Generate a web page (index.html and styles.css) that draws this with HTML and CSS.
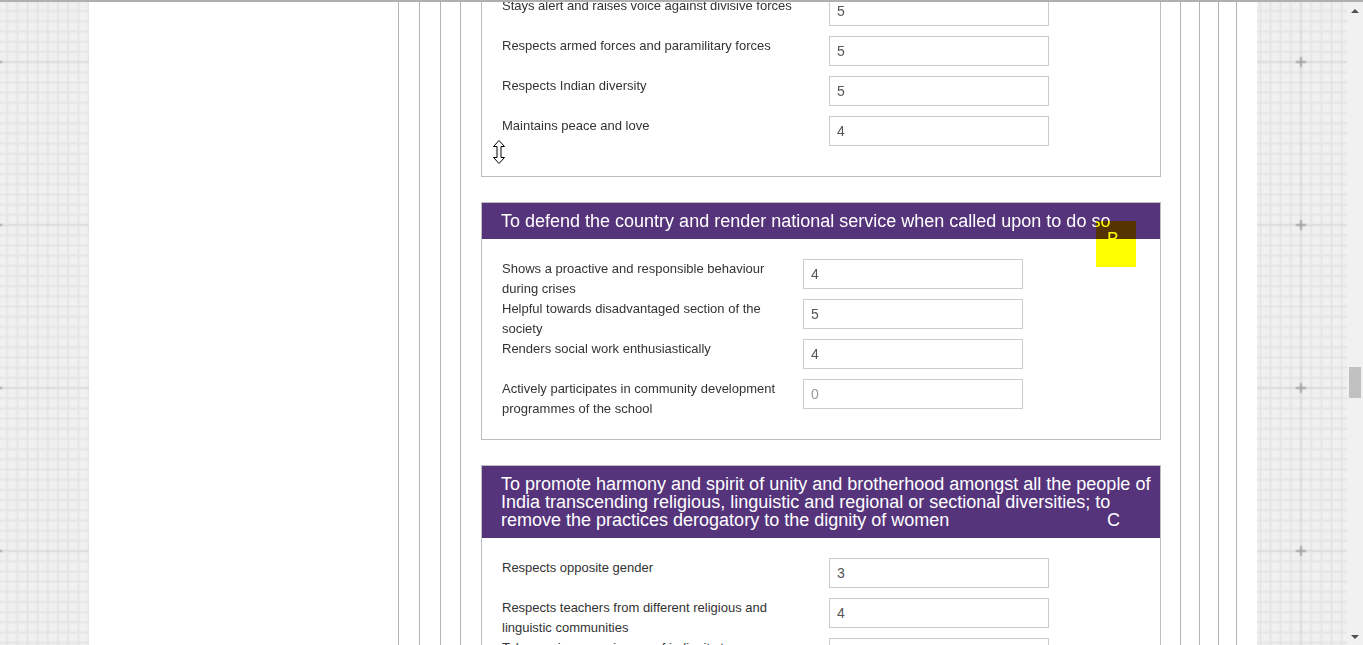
FILE: index.html
```html
<!DOCTYPE html>
<html lang="en">
<head>
<meta charset="utf-8">
<title>Fundamental duties assessment</title>
<link rel="stylesheet" href="styles.css">
</head>
<body>
<div class="topline"></div>
<div class="window">
  <aside class="grid-panel left">
    <svg class="grid" xmlns="http://www.w3.org/2000/svg">
      <defs>
        <pattern id="gridL" width="163" height="163" patternUnits="userSpaceOnUse" x="-84.5" y="-21.5">
          <rect width="163" height="163" fill="#f0f0f0"/>
          <path d="M0 0V163M10.19 0V163M20.38 0V163M30.56 0V163M40.75 0V163M50.94 0V163M61.13 0V163M71.31 0V163M91.69 0V163M101.88 0V163M112.06 0V163M122.25 0V163M132.44 0V163M142.63 0V163M152.81 0V163M163 0V163" stroke="#e5e5e5" stroke-width="2"/>
          <path d="M0 0H163M0 10.19H163M0 20.38H163M0 30.56H163M0 40.75H163M0 50.94H163M0 61.13H163M0 71.31H163M0 91.69H163M0 101.88H163M0 112.06H163M0 122.25H163M0 132.44H163M0 142.63H163M0 152.81H163M0 163H163" stroke="#e5e5e5" stroke-width="2"/>
          <path d="M81.5 0V163M0 81.5H163" stroke="#dadada" stroke-width="2"/>
          <path d="M76.5 81.5H86.5M81.5 76.5V86.5" stroke="#a3a3a3" stroke-width="2"/>
        </pattern>
      </defs>
      <rect width="100%" height="100%" fill="url(#gridL)"/>
    </svg>
  </aside>

  <main class="page">
    <div class="frame f1"><div class="frame f2"><div class="frame f3"><div class="frame f4">

      <section class="duty first">
        <h3 class="duty-title">To uphold and protect the sovereignty, unity and integrity of India<span class="grade">A</span></h3>
        <div class="duty-body">
          <div class="item"><label class="item-label">Stays alert and raises voice against divisive forces</label><input class="score" type="text" value="5"></div>
          <div class="item"><label class="item-label">Respects armed forces and paramilitary forces</label><input class="score" type="text" value="5"></div>
          <div class="item"><label class="item-label">Respects Indian diversity</label><input class="score" type="text" value="5"></div>
          <div class="item"><label class="item-label">Maintains peace and love</label><input class="score" type="text" value="4"></div>
        </div>
      </section>

      <section class="duty narrow">
        <h3 class="duty-title">To defend the country and render national service when called upon to do so<span class="grade">B</span></h3>
        <div class="duty-body">
          <div class="item"><label class="item-label">Shows a proactive and responsible behaviour during crises</label><input class="score" type="text" value="4"></div>
          <div class="item"><label class="item-label">Helpful towards disadvantaged section of the society</label><input class="score" type="text" value="5"></div>
          <div class="item"><label class="item-label">Renders social work enthusiastically</label><input class="score" type="text" value="4"></div>
          <div class="item"><label class="item-label">Actively participates in community development programmes of the school</label><input class="score" type="text" placeholder="0"></div>
        </div>
        <div class="highlight"></div>
      </section>

      <section class="duty">
        <h3 class="duty-title">To promote harmony and spirit of unity and brotherhood amongst all the people of India transcending religious, linguistic and regional or sectional diversities; to remove the practices derogatory to the dignity of women<span class="grade">C</span></h3>
        <div class="duty-body">
          <div class="item"><label class="item-label">Respects opposite gender</label><input class="score" type="text" value="3"></div>
          <div class="item"><label class="item-label">Respects teachers from different religious and linguistic communities</label><input class="score" type="text" value="4"></div>
          <div class="item"><label class="item-label">Takes serious cognisance of indignity to women</label><input class="score" type="text" value="4"></div>
          <div class="item"><label class="item-label">Celebrates festivals of all communities</label><input class="score" type="text" value="3"></div>
          <div class="item"><label class="item-label">Avoids discrimination of any kind</label><input class="score" type="text" value="4"></div>
        </div>
      </section>

    </div></div></div></div>
  </main>

  <aside class="grid-panel right">
    <svg class="grid" xmlns="http://www.w3.org/2000/svg">
      <defs>
        <pattern id="gridR" width="163" height="163" patternUnits="userSpaceOnUse" x="-37.5" y="-21.5">
          <rect width="163" height="163" fill="#f0f0f0"/>
          <path d="M0 0V163M10.19 0V163M20.38 0V163M30.56 0V163M40.75 0V163M50.94 0V163M61.13 0V163M71.31 0V163M91.69 0V163M101.88 0V163M112.06 0V163M122.25 0V163M132.44 0V163M142.63 0V163M152.81 0V163M163 0V163" stroke="#e5e5e5" stroke-width="2"/>
          <path d="M0 0H163M0 10.19H163M0 20.38H163M0 30.56H163M0 40.75H163M0 50.94H163M0 61.13H163M0 71.31H163M0 91.69H163M0 101.88H163M0 112.06H163M0 122.25H163M0 132.44H163M0 142.63H163M0 152.81H163M0 163H163" stroke="#e5e5e5" stroke-width="2"/>
          <path d="M81.5 0V163M0 81.5H163" stroke="#dadada" stroke-width="2"/>
          <path d="M76.5 81.5H86.5M81.5 76.5V86.5" stroke="#a3a3a3" stroke-width="2"/>
        </pattern>
      </defs>
      <rect width="100%" height="100%" fill="url(#gridR)"/>
    </svg>
  </aside>

  <div class="scrollbar">
    <div class="sb-btn"><span class="arrow-up"></span></div>
    <div class="thumb"></div>
    <div class="sb-spacer"></div>
    <div class="sb-btn"><span class="arrow-down"></span></div>
  </div>
</div>

<svg class="cursor" viewBox="0 0 12 24" xmlns="http://www.w3.org/2000/svg">
  <path d="M6 0.5L11.5 6.5H8V17.5H11.5L6 23.5L0.5 17.5H4V6.5H0.5Z" fill="#fff" stroke="#000" stroke-width="1" stroke-linejoin="miter"/>
</svg>
</body>
</html>
```

FILE: styles.css
```css
html, body {
  margin: 0;
  height: 100%;
  overflow: hidden;
}

body {
  font-family: "Liberation Sans", Arial, sans-serif;
  background: #f0f0f0;
}

.topline {
  height: 2px;
  background: #b0b0b0;
}

.window {
  display: flex;
  height: 643px;
}

.grid-panel {
  flex: 0 0 89px;
  overflow: hidden;
}

.grid-panel.right {
  flex-basis: 90px;
}

.grid {
  display: block;
  width: 100%;
  height: 100%;
}

.page {
  flex: 0 0 1168px;
  box-sizing: border-box;
  background: #fff;
  overflow: hidden;
  padding: 0 20px 0 309px;
}

.frame {
  border-left: 1px solid #b4b4b4;
  border-right: 1px solid #b4b4b4;
}

.f1 { padding: 0 17px 0 20px; }
.f2 { padding: 0 18px 0 20px; }
.f3 { padding: 0 18px 0 19px; }
.f4 { padding: 0 19px 0 20px; }

.duty {
  position: relative;
  border: 1px solid #bdbdbd;
  background: #fff;
  margin-bottom: 25px;
}

.duty.first {
  margin-top: -63px;
}

.duty-title {
  margin: 0;
  padding: 9px 4px 9px 19px;
  background: #55347b;
  color: #fff;
  font-size: 18px;
  line-height: 18px;
  font-weight: normal;
}

.grade {
  float: right;
  width: 49px;
}

.duty-body {
  padding: 20px;
}

.item {
  display: flex;
  gap: 20px;
  min-height: 40px;
  align-items: flex-start;
}

.item-label {
  flex: none;
  width: 307px;
  font-size: 13px;
  line-height: 20px;
  color: #333;
}

.duty.narrow .item-label {
  width: 281px;
}

.score {
  flex: none;
  box-sizing: border-box;
  width: 220px;
  height: 30px;
  margin: 0;
  padding: 0 7px;
  border: 1px solid #cccccc;
  border-radius: 0;
  background: #fff;
  font: 14px "Liberation Sans", Arial, sans-serif;
  color: #555;
  outline: none;
}

.score::placeholder {
  color: #999;
}

.highlight {
  position: absolute;
  left: 614px;
  top: 18px;
  width: 40px;
  height: 46px;
  background: #ffff00;
  mix-blend-mode: multiply;
}

.scrollbar {
  flex: 0 0 16px;
  display: flex;
  flex-direction: column;
  align-items: center;
  background: #f1f1f1;
}

.sb-btn {
  height: 17px;
  width: 100%;
  display: flex;
  align-items: center;
  justify-content: center;
}

.arrow-up {
  width: 0;
  height: 0;
  border-left: 4px solid transparent;
  border-right: 4px solid transparent;
  border-bottom: 4px solid #505050;
}

.arrow-down {
  width: 0;
  height: 0;
  border-left: 4px solid transparent;
  border-right: 4px solid transparent;
  border-top: 4px solid #505050;
}

.thumb {
  width: 12px;
  height: 31px;
  margin-top: 348px;
  background: #c1c1c1;
}

.sb-spacer {
  flex: 1;
}

.cursor {
  position: absolute;
  left: 493px;
  top: 140px;
  width: 12px;
  height: 24px;
}
```
